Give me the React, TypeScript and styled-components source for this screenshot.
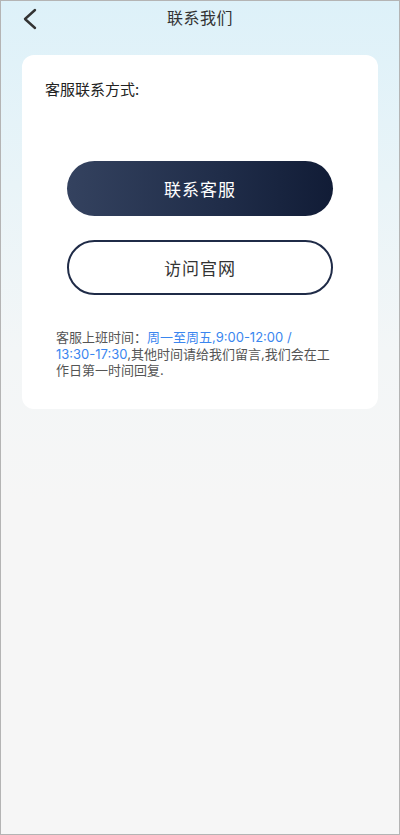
import styled, { createGlobalStyle } from "styled-components";

const GlobalStyle = createGlobalStyle`
  html, body {
    margin: 0;
    padding: 0;
  }
  body {
    font-family: "Noto Sans CJK SC", "Noto Sans", sans-serif;
    background: #f5f5f5;
  }
`

function BackIcon() {
  return <svg width="16" height="22" viewBox="0 0 16 22" fill="none">
    <path d="M13 2L3 11l10 9" stroke="#333" strokeWidth="2.4" strokeLinecap="round" strokeLinejoin="round" />
  </svg>
}

function App() {
  return <Page>
    <GlobalStyle />
    <Header>
      <BackButton><BackIcon /></BackButton>
      <Title>联系我们</Title>
    </Header>
    <Card>
      <CardTitle>客服联系方式:</CardTitle>
      <Buttons>
        <Button primary>联系客服</Button>
        <Button>访问官网</Button>
      </Buttons>
      <Notice>
        客服上班时间：<Highlight>周一至周五,9:00-12:00 / <NoWrap>13:30-17:30</NoWrap></Highlight>,其他时间请给我们留言,我们会在工作日第一时间回复.
      </Notice>
    </Card>
  </Page>
}

export default App;

const Page = styled.div`
  box-sizing: border-box;
  height: 835px;
  border: 1px solid #b4b4b4;
  background: linear-gradient(180deg, #ddf1f9 0%, #e9f4f8 22%, #f3f6f7 42%, #f6f6f6 60%);
  display: flex;
  flex-direction: column;
  padding: 0 21px;
`
const Header = styled.div`
  height: 54px;
  display: flex;
  align-items: flex-start;
  justify-content: center;
  position: relative;
`
const BackButton = styled.div`
  position: absolute;
  left: 0;
  top: 7px;
`
const Title = styled.div`
  margin-top: 4px;
  font-size: 16px;
  line-height: 24px;
  color: #333;
  letter-spacing: 0.5px;
`
const Card = styled.div`
  background: #fff;
  border-radius: 12px;
  padding: 23px 23px 28px 23px;
  height: 354px;
  box-sizing: border-box;
`
const CardTitle = styled.div`
  font-size: 15px;
  line-height: 22px;
  color: #222;
`
const Buttons = styled.div`
  display: flex;
  flex-direction: column;
  gap: 24px;
  margin: 61px 22px 0 22px;
`
const Button = styled.div<{ primary?: boolean }>`
  box-sizing: border-box;
  height: 55px;
  border-radius: 28px;
  display: flex;
  align-items: center;
  justify-content: center;
  font-size: 17px;
  letter-spacing: 1px;
  color: ${p => p.primary ? "#fff" : "#333"};
  background: ${p => p.primary ? "linear-gradient(90deg, #34425f 0%, #1f2c48 60%, #111c36 100%)" : "#fff"};
  border: ${p => p.primary ? "none" : "2px solid #1f2b47"};
`
const Notice = styled.p`
  margin: 34px 17px 0 11px;
  font-family: Inter, "Noto Sans CJK SC", sans-serif;
  font-size: 13px;
  line-height: 16.5px;
  color: #555;
`
const Highlight = styled.span`
  color: #3a86ef;
`
const NoWrap = styled.span`
  white-space: nowrap;
`
